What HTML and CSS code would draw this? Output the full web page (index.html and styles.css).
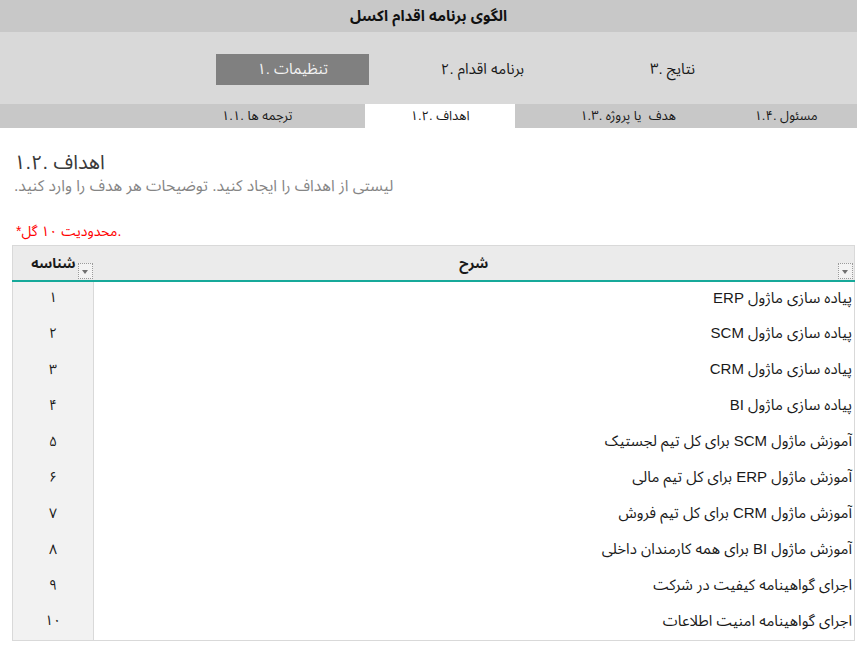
FILE: index.html
```html
<!DOCTYPE html>
<html lang="fa">
<head>
<meta charset="utf-8">
<title>الگوی برنامه اقدام اکسل</title>
<link rel="stylesheet" href="styles.css">
</head>
<body>
<div class="page">
  <div class="titlebar" dir="rtl">الگوی برنامه اقدام اکسل</div>
  <div class="nav">
    <div class="tab active" dir="rtl">تنظیمات .۱</div>
    <div class="tab" dir="rtl">برنامه اقدام .۲</div>
    <div class="tab" dir="rtl">نتایج .۳</div>
  </div>
  <div class="subnav">
    <div class="sub-spacer"></div>
    <div class="sub s11" dir="rtl">ترجمه ها .۱.۱</div>
    <div class="sub s12 active" dir="rtl">اهداف .۱.۲</div>
    <div class="sub-gap"></div>
    <div class="sub s13" dir="rtl">هدف&nbsp; یا پروژه .۱.۳</div>
    <div class="sub s14" dir="rtl">مسئول .۱.۴</div>
  </div>

  <div class="intro">
    <h1 class="heading" dir="rtl">اهداف .۱.۲</h1>
    <p class="desc" dir="rtl">لیستی از اهداف را ایجاد کنید. توضیحات هر هدف را وارد کنید.</p>
    <p class="note" dir="rtl">.محدودیت ۱۰ گل*</p>
  </div>

  <table class="grid">
    <thead>
      <tr>
        <th class="col-id"><span class="hlabel" dir="rtl">شناسه</span><span class="dd"></span></th>
        <th class="col-desc"><span class="hlabel" dir="rtl">شرح</span><span class="dd"></span></th>
      </tr>
    </thead>
    <tbody>
      <tr><td class="col-id">۱</td><td class="col-desc" dir="rtl">پیاده سازی ماژول ERP</td></tr>
      <tr><td class="col-id">۲</td><td class="col-desc" dir="rtl">پیاده سازی ماژول SCM</td></tr>
      <tr><td class="col-id">۳</td><td class="col-desc" dir="rtl">پیاده سازی ماژول CRM</td></tr>
      <tr><td class="col-id">۴</td><td class="col-desc" dir="rtl">پیاده سازی ماژول BI</td></tr>
      <tr><td class="col-id">۵</td><td class="col-desc" dir="rtl">آموزش ماژول SCM برای کل تیم لجستیک</td></tr>
      <tr><td class="col-id">۶</td><td class="col-desc" dir="rtl">آموزش ماژول ERP برای کل تیم مالی</td></tr>
      <tr><td class="col-id">۷</td><td class="col-desc" dir="rtl">آموزش ماژول CRM برای کل تیم فروش</td></tr>
      <tr><td class="col-id">۸</td><td class="col-desc" dir="rtl">آموزش ماژول BI برای همه کارمندان داخلی</td></tr>
      <tr><td class="col-id">۹</td><td class="col-desc" dir="rtl">اجرای گواهینامه کیفیت در شرکت</td></tr>
      <tr><td class="col-id">۱۰</td><td class="col-desc" dir="rtl">اجرای گواهینامه امنیت اطلاعات</td></tr>
    </tbody>
  </table>
</div>
</body>
</html>
```

FILE: styles.css
```css
html, body {
  margin: 0;
  padding: 0;
  background: #ffffff;
}

body {
  font-family: "Liberation Sans", "Noto Sans Arabic", "DejaVu Sans", sans-serif;
  color: #1e1e1e;
}

.page {
  width: 857px;
}

.titlebar {
  height: 32px;
  background: #c8c8c8;
  display: flex;
  align-items: center;
  justify-content: center;
  font-weight: bold;
  font-size: 15px;
  color: #111;
}

.nav {
  height: 72px;
  background: #d9d9d9;
  display: flex;
  align-items: center;
  padding-left: 216px;
  gap: 37px;
  box-sizing: border-box;
}

.tab {
  width: 153px;
  height: 31px;
  display: flex;
  align-items: center;
  justify-content: center;
  font-size: 15px;
  color: #1a1a1a;
  margin-top: 2px;
}

.tab.active {
  background: #808080;
  color: #f2f2f2;
}

.subnav {
  height: 24px;
  background: #c8c8c8;
  display: flex;
  font-size: 13px;
}

.sub-spacer { width: 149px; }
.sub-gap { width: 26px; }

.sub {
  display: flex;
  align-items: center;
  justify-content: center;
  color: #1a1a1a;
}

.s11 { width: 216px; }
.s12 { width: 150px; }
.s13 { width: 174px; }
.s14 { width: 142px; }

.sub.active {
  background: #ffffff;
}

.intro {
  padding: 0 14px;
}

.heading {
  margin: 21px 0 0;
  font-size: 20px;
  font-weight: normal;
  color: #3a3a3a;
  text-align: left;
  line-height: 26px;
}

.desc {
  margin: 0;
  font-size: 15.6px;
  color: #858585;
  text-align: left;
  line-height: 22px;
}

.note {
  margin: 24px 0 0 2px;
  font-size: 14px;
  color: #ff0000;
  text-align: left;
  line-height: 20px;
}

.grid {
  margin: 4px 0 0 12px;
  width: 843px;
  border-collapse: collapse;
  table-layout: fixed;
  border: 1px solid #d9d9d9;
}

.grid thead th {
  height: 35px;
  background: #ebebeb;
  border-bottom: 2px solid #16a99a;
  padding: 0;
  font-size: 14px;
  font-weight: bold;
  color: #1a1a1a;
  position: relative;
  box-sizing: border-box;
}

.grid th.col-id {
  width: 81px;
  text-align: right;
  padding-right: 18px;
}

.grid th.col-desc {
  text-align: center;
}

.hlabel {
  display: inline-block;
  position: relative;
  top: 1px;
}

.dd {
  position: absolute;
  right: 1px;
  bottom: 1px;
  width: 13px;
  height: 14px;
  background: #f3f3f3;
  border: 1px dotted #9a9a9a;
}

.dd::after {
  content: "";
  position: absolute;
  left: 3px;
  top: 6px;
  border-left: 3.5px solid transparent;
  border-right: 3.5px solid transparent;
  border-top: 4px solid #707070;
}

.grid td {
  height: 36px;
  padding: 0;
  font-size: 14px;
  color: #1a1a1a;
  box-sizing: border-box;
  vertical-align: middle;
  padding-bottom: 3px;
}

.grid td.col-id {
  background: #f2f2f2;
  text-align: center;
  border-right: 1px solid #d9d9d9;
}

.grid td.col-desc {
  text-align: right;
  padding-right: 2px;
  font-size: 15px;
}
```
